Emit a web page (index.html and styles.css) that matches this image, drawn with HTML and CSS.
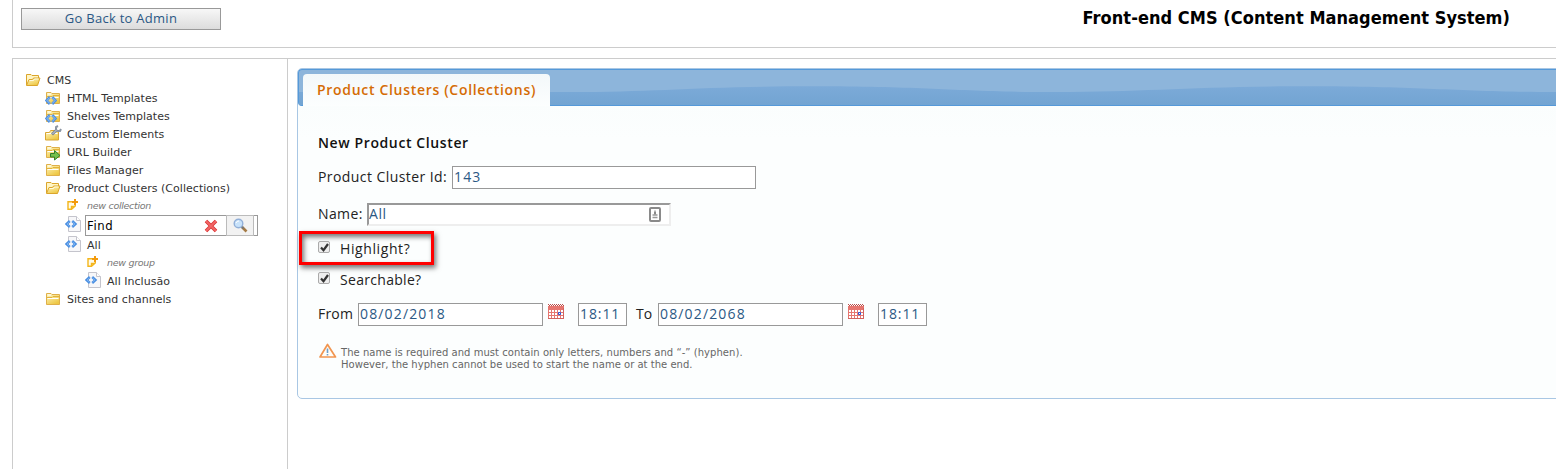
FILE: index.html
```
<!DOCTYPE html>
<html lang="en">
<head>
<meta charset="utf-8">
<title>Front-end CMS</title>
<link rel="stylesheet" href="styles.css">
</head>
<body>
<svg class="defs" width="0" height="0">
  <defs>
    <linearGradient id="gold" x1="0" y1="0" x2="0.6" y2="1"><stop offset="0" stop-color="#fff8c8"/><stop offset="1" stop-color="#eec845"/></linearGradient>
    <linearGradient id="bar" x1="0" y1="0" x2="0" y2="1"><stop offset="0" stop-color="#7caad8"/><stop offset="1" stop-color="#72a4d2"/></linearGradient>
    <symbol id="folder" viewBox="0 0 16 14"><path d="M1.5 12.5v-11H6l1 1h7.500v10z" fill="url(#gold)" stroke="#dfb04a"/><path d="M3 3h3M2.500 6.500h11" stroke="#fff" fill="none"/><path d="M2 5.500h5l1-1h6" stroke="#e3b23c" fill="none"/></symbol>
    <symbol id="open" viewBox="0 0 16 14"><path d="M1.500 12V1.500H6l1 1h6.500V5" fill="#fff5c4" stroke="#dba52b"/><path d="M1.500 12.500L4 6.500h3.500l1-1.500h6.500l-2.500 7.500z" fill="url(#gold)" stroke="#dba52b"/><path d="M4.500 7.500h4l1-1.500h4" stroke="#fffbe0" fill="none"/></symbol>
    <symbol id="code" viewBox="0 0 12 10"><path d="M4.800 1.500L1.500 5l3.300 3.500M7.200 1.500L10.500 5 7.200 8.500" fill="none" stroke="#4f90e0" stroke-width="2.600"/><path d="M4.800 2L2 5l2.800 3M7.200 2L10 5 7.200 8" fill="none" stroke="#9ac6f6" stroke-width=".9"/></symbol>
    <symbol id="page" viewBox="0 0 16 16"><path d="M3.500 .5h8l4 4v11h-12z" fill="#f7f7f9" stroke="#c4c4cc"/><path d="M11.500 .5v4h4" fill="#fff" stroke="#c4c4cc"/><path d="M4.800 5L1.500 8l3.300 3M7.200 5l3.300 3-3.300 3" fill="none" stroke="#4a8fe2" stroke-width="2.400"/><path d="M4.500 5.700L2 8l2.500 2.300M7.500 5.700L10 8l-2.500 2.300" fill="none" stroke="#8abcf5" stroke-width=".7"/></symbol>
    <symbol id="new" viewBox="0 0 12 12"><path d="M5 2.800H1v7.500h3.500L8.300 7V6M4.500 10V7.500H8" fill="#fffbe8" stroke="#f4b61c" stroke-width="1.400"/><path d="M8 0v6M5 3h6" stroke="#f39a0c" stroke-width="2"/></symbol>
    <symbol id="calendar" viewBox="0 0 16 16"><path d="M0 2h16v13H0z" fill="#e67670"/><path d="M0 .5h16" stroke="#b84d4a" stroke-dasharray="1 1"/><path d="M1 1.500h15" stroke="#b84d4a" stroke-dasharray="1 1"/><path d="M1 6h2v2H1zM4 6h2v2H4zM7 6h2v2H7zM10 6h2v2h-2zM13 6h2v2h-2zM1 9h2v2H1zM4 9h2v2H4zM7 9h2v2H7zM13 9h2v2h-2zM1 12h2v2H1zM4 12h2v2H4zM7 12h2v2H7zM10 12h2v2h-2zM13 12h2v2h-2z" fill="#fff"/><path d="M10.500 8.500h2v2h-2z" fill="#fff" stroke="#2857df"/><path d="M0 14.500h16M15.500 4v11" stroke="#c95c58" opacity=".7"/></symbol>
  </defs>
</svg>
<header class="top">
  <button class="back"><span>Go Back to Admin</span></button>
  <h1>Front-end CMS (Content Management System)</h1>
</header>
<main>
  <nav class="tree">
    <div class="row l0"><svg class="fi"><use href="#open"/></svg><span>CMS</span></div>
    <div class="row l1"><svg class="fi" viewBox="0 0 16 14"><use href="#folder" width="16" height="14"/><use href="#code" x="0" y="4.500" width="12" height="10"/></svg><span>HTML Templates</span></div>
    <div class="row l1"><svg class="fi" viewBox="0 0 16 14"><use href="#folder" width="16" height="14"/><use href="#code" x="0" y="4.500" width="12" height="10"/></svg><span>Shelves Templates</span></div>
    <div class="row l1"><svg class="fi" viewBox="0 0 16 14"><path d="M.5 5.500h4l1-2h8v9.500H.5z" fill="url(#gold)" stroke="#d9a632"/><path d="M1.500 6.500h11" stroke="#fff"/><path d="M7 7.500l5-5" stroke="#7c8694" stroke-width="2.800"/><path d="M7.500 7l4.500-4.500" stroke="#cbd2dc"/><path d="M11 3V0l2-1M12 4h3l1-2" fill="none" stroke="#8b95a3" stroke-width="2"/></svg><span>Custom Elements</span></div>
    <div class="row l1"><svg class="fi" viewBox="0 0 16 14"><use href="#folder" width="16" height="14"/><path d="M5.500 8.500h4v-3l5.500 5-5.500 4.500v-3h-4z" fill="#74c04b" stroke="#337e2b"/></svg><span>URL Builder</span></div>
    <div class="row l1"><svg class="fi"><use href="#folder"/></svg><span>Files Manager</span></div>
    <div class="row l1"><svg class="fi"><use href="#open"/></svg><span>Product Clusters (Collections)</span></div>
    <div class="row l2 add"><svg class="ni"><use href="#new"/></svg><span>new collection</span></div>
    <div class="row l2 find"><svg class="pi"><use href="#page"/></svg>
      <div class="search"><span>Find</span>
        <svg class="x" viewBox="0 0 14 14"><path d="M2 2l10 10M12 2L2 12" stroke="#d93535" stroke-width="3.600"/><path d="M2 2l10 10M12 2L2 12" stroke="#f26666" stroke-width="1.800"/></svg>
        <div class="go"><svg width="15" height="15" viewBox="0 0 15 15"><path d="M9 9l4.500 4.500" stroke="#a57b45" stroke-width="2.600"/><path d="M8.500 8.500l2 2" stroke="#777" stroke-width="2"/><circle cx="5.500" cy="5.500" r="4.300" fill="#c8e2fa" stroke="#91afd8" stroke-width="1.400"/><path d="M3 5a3 3 0 0 1 3-2" fill="none" stroke="#fff"/></svg></div>
      </div>
    </div>
    <div class="row l2 all"><svg class="pi"><use href="#page"/></svg><span>All</span></div>
    <div class="row l3 add group"><svg class="ni"><use href="#new"/></svg><span>new group</span></div>
    <div class="row l3 incl"><svg class="pi"><use href="#page"/></svg><span>All Inclusão</span></div>
    <div class="row l1"><svg class="fi"><use href="#folder"/></svg><span>Sites and channels</span></div>
  </nav>
  <section class="panel">
    <div class="tabs">
      <svg class="wave" width="1300" height="35" viewBox="0 0 1300 35"><path d="M0 35V22C80 22 170 22 270 22C360 22 400 16.300 515 16.300C630 16.300 660 22 755 22C850 22 890 16.300 1010 16.300C1125 16.300 1160 22 1255 22L1300 21V35z" fill="url(#bar)"/></svg>
      <div class="tab"><span>Product Clusters (Collections)</span></div>
    </div>
    <div class="form">
      <h2><span>New Product Cluster</span></h2>
      <div class="field id"><label>Product Cluster Id:</label><div class="input"><span>143</span></div></div>
      <div class="field name"><label>Name:</label><div class="input inset"><span>All</span><svg width="12" height="15" viewBox="0 0 12 15"><rect x="1" y="1" width="10" height="13" rx="1" fill="#fff" stroke="#8a8a8a" stroke-width="2"/><path d="M6 3.500v4M3.500 8h5M3.500 10.500h5" stroke="#999" stroke-width="1.500"/><path d="M5 6h2" stroke="#888" stroke-width="2"/></svg></div></div>
      <div class="check marked"><i><svg width="11" height="11" viewBox="0 0 11 11"><path d="M2 5.500l2.500 2.700L9 2" fill="none" stroke="#333" stroke-width="2.200"/></svg></i><label>Highlight?</label></div>
      <div class="check second"><i><svg width="11" height="11" viewBox="0 0 11 11"><path d="M2 5.500l2.500 2.700L9 2" fill="none" stroke="#333" stroke-width="2.200"/></svg></i><label>Searchable?</label></div>
      <div class="dates">
        <label class="from">From</label><div class="input date"><span>08/02/2018</span></div><svg class="cal"><use href="#calendar"/></svg><div class="input time"><span>18:11</span></div>
        <label class="to">To</label><div class="input date"><span>08/02/2068</span></div><svg class="cal"><use href="#calendar"/></svg><div class="input time"><span>18:11</span></div>
      </div>
      <div class="note"><svg width="18" height="16" viewBox="0 0 18 16"><path d="M8.500 1.500L1 14h15.500z" fill="#fffdf8" stroke="#f19550" stroke-width="1.700" stroke-linejoin="round"/><path d="M8.500 5.500v4.500M8.500 11v1.500" stroke="#6ba0cb" stroke-width="1.600"/></svg><p>The name is required and must contain only letters, numbers and “-” (hyphen).<br><span class="n2">However, the hyphen cannot be used to start the name or at the end.</span></p></div>
    </div>
  </section>
</main>
</body>
</html>
```
FILE: styles.css
```
* { box-sizing: border-box; }
body { margin: 0; width: 1556px; height: 469px; overflow: hidden; background: #fff; font-family: "DejaVu Sans", sans-serif; color: #333; }
.defs { display: block; height: 0; }
svg { overflow: visible; flex: none; }
span, label { white-space: nowrap; }
.top { height: 48px; margin-left: 12px; border: solid #ccc; border-width: 0 0 1px 1px; display: flex; justify-content: space-between; align-items: flex-start; padding: 8px 46px 0 8px; }
.back { width: 200px; height: 22px; padding: 0; border: 1px solid #999; background: linear-gradient(#f7f7f7, #dcdcdc); font: 13px/18px "Open Sans", sans-serif; letter-spacing: .27px; color: #2a5785; }
.back span { display: block; margin-top: -2px; }
h1 { margin: 0; font: bold 18px/20px "DejaVu Sans Condensed", "DejaVu Sans", sans-serif; color: #000; letter-spacing: .05px; white-space: nowrap; }
main { display: flex; height: 411px; margin: 10px 0 0 12px; border: solid #ccc; border-width: 1px 0 0 1px; }
.tree { width: 275px; flex: none; border-right: 1px solid #ccc; padding-top: 12px; font-size: 11px; letter-spacing: .03px; }
.row { display: flex; align-items: center; height: 18px; }
.l0 { padding-left: 12px; }
.l1 { padding-left: 32px; }
.l2 { padding-left: 52px; }
.l3 { padding-left: 72px; }
.fi { width: 16px; height: 14px; margin-right: 6px; }
.pi { width: 16px; height: 16px; margin-right: 6px; }
.ni { width: 12px; height: 12px; margin: -2px 8px 0 2px; }
.add { font-size: 9.500px; font-style: italic; color: #777; letter-spacing: -.3px; }
.add span { margin-top: -1px; }
.find { height: 21px; }
.find .pi { margin-right: 4px; margin-top: -4px; }
.all .pi { margin-top: -2px; }
.group { height: 17px; }
.incl { height: 19px; }
.incl .pi { margin-top: -1px; }
.incl span { margin-top: 1px; }
.search { display: flex; align-items: center; width: 173px; height: 21px; border: 1px solid #999; padding-left: 1px; background: #fff; font-family: "DejaVu Sans Condensed", sans-serif; font-size: 13px; color: #000; letter-spacing: .6px; }
.search > span { width: 117px; }
.x { width: 14px; height: 14px; margin-right: 8px; }
.go { width: 28px; height: 21px; margin-top: -1px; border: 1px solid #bbb; background: #f2f2f2; display: grid; place-items: center; }
.panel { margin: 9px 0 0 9px; width: 1290px; height: 331px; flex: none; border: 1px solid #a9c7e4; border-radius: 5px; background: linear-gradient(#f8fcfc, #fcfefe 70px); }
.tabs { height: 37px; border: solid #5599d9; border-width: 1px 0 1px 1px; border-radius: 4px 0 0 4px; background: #8db5db; display: grid; }
.wave, .tab { grid-area: 1 / 1; }
.tab { margin: 4px 0 -1px 4px; width: 247px; height: 32px; border-radius: 4px 4px 0 0; background: linear-gradient(#f3f8fa, #fcfefe); padding-left: 14px; font: 600 14px/32px "Open Sans", sans-serif; letter-spacing: .69px; color: #d56c05; }
.form { padding-left: 20px; font: 14px/22px "Open Sans", sans-serif; color: #222; }
h2 { margin: 27px 0 0; height: 20px; font: 600 14px/20px "Open Sans", sans-serif; letter-spacing: .61px; color: #111; }
.field { display: flex; align-items: center; height: 23px; }
.id { margin-top: 13px; }
.id label { width: 134px; letter-spacing: .43px; }
.name { margin-top: 14px; }
.name label { width: 49px; letter-spacing: .4px; }
.field label, .input span { margin-top: -2px; }
.input { width: 304px; height: 23px; border: 1px solid #999; background: #fff; padding-left: 1px; display: flex; align-items: center; justify-content: space-between; color: #2b5884; letter-spacing: 1.15px; line-height: 21px; }
.inset { border: 2px solid; border-color: #999 #eee #eee #999; padding: 0 8px 0 0; letter-spacing: .6px; }
.check { display: flex; align-items: center; }
.check i { width: 12px; height: 12px; border: 1px solid #aaa; border-radius: 2px; background: #eee; margin: -3px 10px 0 0; display: grid; place-items: center; }
.marked { width: 135px; height: 34px; margin: 5px 0 0 -19px; padding-left: 16px; border: 3px solid #f00; box-shadow: 2px 3px 5px #777, inset 2px 3px 5px #777; }
.marked label { margin-top: 2px; }
.check label { letter-spacing: .6px; }
.second { height: 20px; margin-top: 4px; }
.second label { letter-spacing: .3px; margin-top: 2px; }
.dates { display: flex; margin-top: 14px; }
.from { width: 40px; letter-spacing: .2px; }
.to { width: 22px; margin-left: 9px; }
.date { width: 185px; }
.time { width: 49px; letter-spacing: .9px; }
.cal { width: 16px; height: 16px; margin: 1px 14px 0 5px; }
.note { display: flex; gap: 4px; margin: 17px 0 0 1px; font: 10px/12px "DejaVu Sans", sans-serif; color: #666; letter-spacing: .045px; }
.note p { margin: 4px 0 0; white-space: nowrap; }
.n2 { letter-spacing: .02px; }
```
